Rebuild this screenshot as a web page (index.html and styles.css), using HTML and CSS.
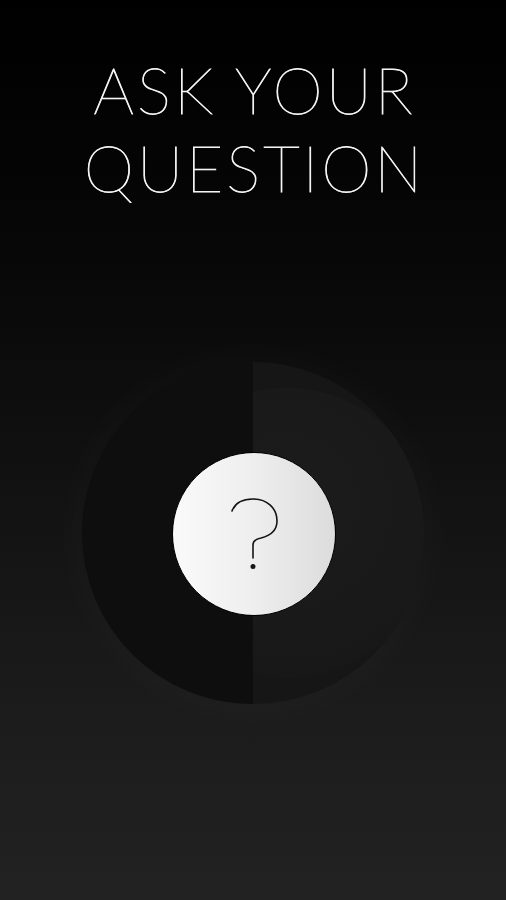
FILE: index.html
```html
<!DOCTYPE html>
<html>
<head>
<meta charset="utf-8">
<link rel="stylesheet" href="styles.css">
</head>
<body>
<main class="screen">
  <h1 class="title">ASK YOUR<br>QUESTION</h1>
  <div class="stage">
    <div class="orb">
      <div class="half-left"></div>
      <div class="lobe"></div>
      <button class="ask" aria-label="Ask">
        <svg class="qmark" viewBox="0 0 51 74" width="51" height="74">
          <path d="M3 14 C6 6 14 2 24 2 C38 2 48 11 48 24 C48 34 40 39 32 41 C27 42 24 44 24 48 L24 61" fill="none" stroke="#151515" stroke-width="1.6" stroke-linecap="round"/>
          <circle cx="24" cy="69.5" r="2.5" fill="#151515"/>
        </svg>
      </button>
    </div>
  </div>
</main>
</body>
</html>
```
FILE: styles.css
```css
html, body {
  margin: 0;
  padding: 0;
  height: 100%;
}
body {
  background: linear-gradient(to bottom, #000 0%, #060606 25%, #121212 55%, #1c1c1c 80%, #222 100%);
  font-family: Lato, "Open Sans", sans-serif;
  overflow: hidden;
}
.screen {
  width: 506px;
  height: 900px;
  display: flex;
  flex-direction: column;
  align-items: center;
}
.title {
  margin: 51px 0 0 0;
  color: #f4f4f4;
  font-family: Lato, sans-serif;
  font-weight: 100;
  -webkit-text-stroke: 0.8px #f4f4f4;
  font-size: 64px;
  line-height: 78px;
  letter-spacing: 3px;
  text-align: center;
  padding-left: 3px;
}
.stage {
  margin-top: 155px;
  display: flex;
  justify-content: center;
  width: 100%;
}
.orb {
  position: relative;
  width: 342px;
  height: 342px;
  border-radius: 50%;
  background: #161616;
  box-shadow: 0 0 40px 10px rgba(255,255,255,0.025);
  overflow: hidden;
  display: flex;
  align-items: center;
  justify-content: center;
}
.half-left {
  position: absolute;
  left: 0;
  top: 0;
  width: 171px;
  height: 342px;
  background: #0e0e0e;
}
.lobe {
  position: absolute;
  left: 60px;
  top: 26px;
  width: 290px;
  height: 290px;
  border-radius: 50%;
  background: radial-gradient(circle at 50% 40%, #1c1c1c 0%, #191919 60%, #151515 100%);
  clip-path: inset(0 0 0 111px);
}
.ask {
  position: relative;
  width: 164px;
  height: 164px;
  border-radius: 50%;
  border: 1px solid #000;
  padding: 0;
  background: linear-gradient(to right, #fafafa 0%, #eeeeee 50%, #dcdcdc 100%);
  display: flex;
  align-items: center;
  justify-content: center;
  margin-left: 2px;
  margin-top: 2px;
}
.qmark {
  display: block;
}
```
